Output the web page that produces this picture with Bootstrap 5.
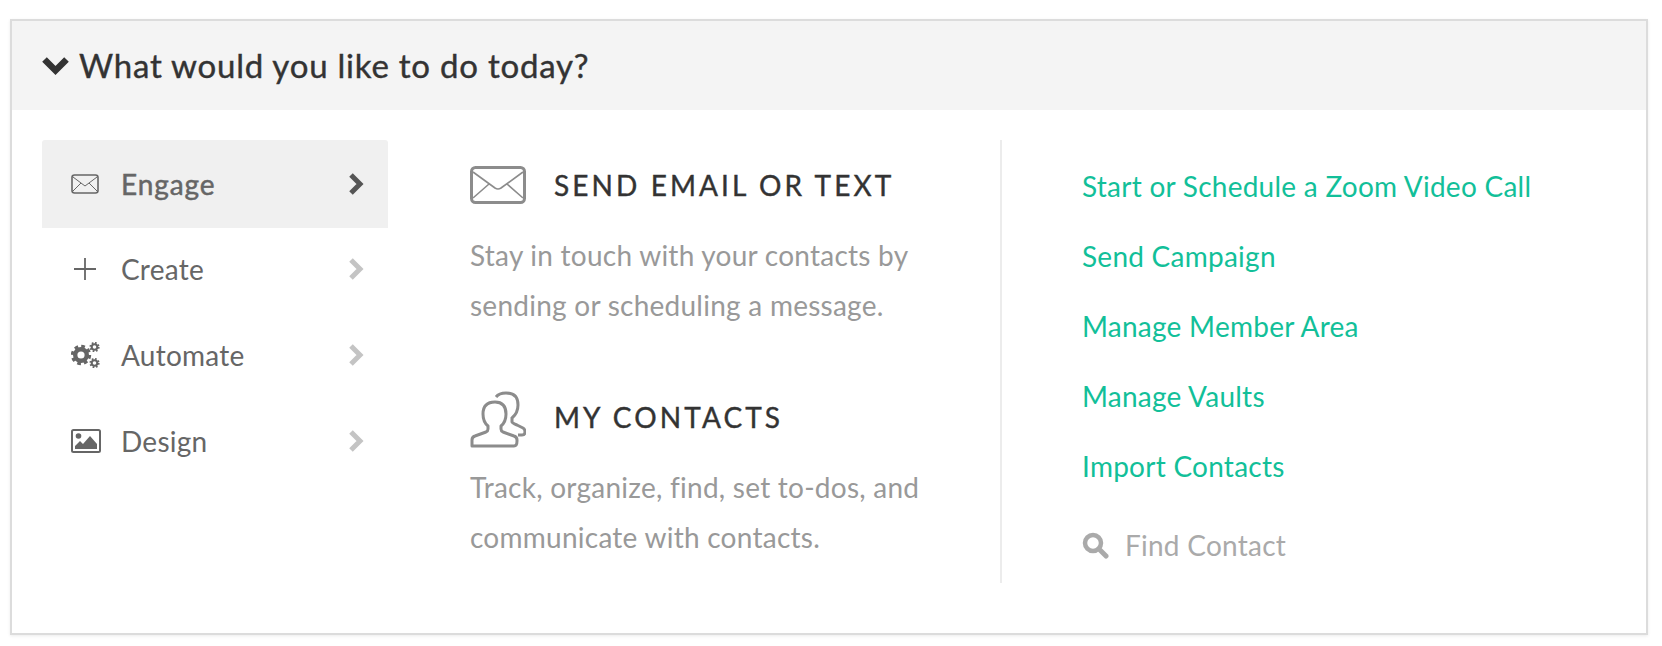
<!DOCTYPE html>
<html lang="en">
<head>
  <meta charset="UTF-8">
  <title>Dashboard</title>
  <meta name="viewport" content="width=device-width, initial-scale=1">
  <link href="https://cdn.jsdelivr.net/npm/bootstrap@5.3.0/dist/css/bootstrap.min.css" rel="stylesheet">
  <style>
    body { background: #fff; font-family: "Lato", "Noto Sans", sans-serif; padding: 19px 14px 11px 10px; letter-spacing: .25px; }
    .todo-card { border: 2px solid #dcdcdc; border-radius: 0; height: 616px; box-shadow: 0 1px 3px rgba(0,0,0,.08); }
    .todo-head { background: #f4f4f4; border: 0; border-radius: 0 !important; height: 89px; padding: 0 0 0 29px; gap: 9px; color: #333; font-size: 33px; letter-spacing: .77px; -webkit-text-stroke: .4px #333; }
    .todo-body { padding: 30px 0 0 30px; }
    .side-col { width: 346px; flex: none; }
    .side-item { height: 86px; padding: 0 23px 0 29px; color: #666; font-size: 28px; }
    .side-item.is-active { background: #f0f0f0; height: 88px; margin-bottom: -2px; letter-spacing: .9px; -webkit-text-stroke: .5px #666; border-radius: 3px 3px 0 0; }
    .side-ico { width: 32px; margin-right: 18px; flex: none; }
    .side-arrow { margin-left: auto; }
    .mid-col { width: 614px; flex: none; height: 443px; padding: 0 0 0 82px; border-right: 2px solid #ececec; }
    .mid-head { height: 46px; gap: 28px; color: #333; font-size: 28px; letter-spacing: 3.1px; -webkit-text-stroke: .4px #333; }
    .mid-ico { width: 56px; flex: none; }
    .mid-ico-low { margin-top: 6px; }
    .mid-text { color: #999; font-size: 28px; line-height: 50px; margin: 22px 0 0; }
    .mid-block { padding-top: 22px; }
    .mid-block + .mid-block { padding-top: 0; margin-top: 64px; }
    .right-col { padding: 11px 0 0 80px; }
    .right-link { display: block; color: #12bf99; font-size: 28px; line-height: 70px; height: 70px; text-decoration: none; }
    .find-row { color: #aaa; font-size: 28px; gap: 16px; margin-top: 9px; height: 70px; }
  </style>
</head>
<body>

  <div class="card todo-card">
    <div class="card-header todo-head d-flex align-items-center">
      <svg width="29" height="20" viewBox="0 0 29 20"><polyline points="3.5,3.5 14.5,14.5 25.5,3.5" fill="none" stroke="#333" stroke-width="6.5"/></svg>
      <span>What would you like to do today?</span>
    </div>
    <div class="todo-body d-flex">

      <!-- Left menu -->
      <div class="side-col">
        <div class="side-item is-active d-flex align-items-center">
          <svg class="side-ico" height="20" viewBox="0 0 32 20"><rect x="1" y="1" width="26" height="18" rx="2.5" fill="none" stroke="#666" stroke-width="1.6"/><path d="M2 3l12 9 12-9M2 17l8-8M26 17l-8-8" fill="none" stroke="#666" stroke-width="1"/></svg>
          <span>Engage</span>
          <svg class="side-arrow" width="17" height="24" viewBox="0 0 17 24"><polyline points="3,3 12,12 3,21" fill="none" stroke="#555" stroke-width="5"/></svg>
        </div>
        <div class="side-item d-flex align-items-center">
          <svg class="side-ico" height="24" viewBox="0 0 32 24"><path d="M14 1v22M3 12h22" fill="none" stroke="#666" stroke-width="1.8"/></svg>
          <span>Create</span>
          <svg class="side-arrow" width="17" height="24" viewBox="0 0 17 24"><polyline points="3,3 12,12 3,21" fill="none" stroke="#c4c4c4" stroke-width="5"/></svg>
        </div>
        <div class="side-item d-flex align-items-center">
          <svg class="side-ico" height="26" viewBox="0 0 32 26">
            <circle cx="10" cy="13" r="5.8" fill="none" stroke="#666" stroke-width="4.4"/>
            <circle cx="10" cy="13" r="8.5" fill="none" stroke="#666" stroke-width="3.4" stroke-dasharray="3.6 3.07"/>
            <circle cx="23.5" cy="5" r="2.8" fill="none" stroke="#666" stroke-width="2"/>
            <circle cx="23.5" cy="5" r="4.2" fill="none" stroke="#666" stroke-width="1.8" stroke-dasharray="1.65 1.65"/>
            <circle cx="23.5" cy="21" r="2.8" fill="none" stroke="#666" stroke-width="2"/>
            <circle cx="23.5" cy="21" r="4.2" fill="none" stroke="#666" stroke-width="1.8" stroke-dasharray="1.65 1.65"/>
          </svg>
          <span>Automate</span>
          <svg class="side-arrow" width="17" height="24" viewBox="0 0 17 24"><polyline points="3,3 12,12 3,21" fill="none" stroke="#c4c4c4" stroke-width="5"/></svg>
        </div>
        <div class="side-item d-flex align-items-center">
          <svg class="side-ico" height="24" viewBox="0 0 32 24"><rect x="1" y="1" width="28" height="22" rx="1.5" fill="none" stroke="#666" stroke-width="2"/><circle cx="7.5" cy="7" r="2.8" fill="#666"/><path d="M4 20v-3l5-5 3 3 7-8 7 8v5z" fill="#666"/></svg>
          <span>Design</span>
          <svg class="side-arrow" width="17" height="24" viewBox="0 0 17 24"><polyline points="3,3 12,12 3,21" fill="none" stroke="#c4c4c4" stroke-width="5"/></svg>
        </div>
      </div>

      <!-- Middle text -->
      <div class="mid-col">
        <div class="mid-block">
          <div class="mid-head d-flex align-items-center">
            <svg class="mid-ico" height="38" viewBox="0 0 56 38"><rect x="1.5" y="1.5" width="53" height="35" rx="4" fill="none" stroke="#8c8c8c" stroke-width="3"/><path d="M3 6l22 16q3 2 6 0l22-16M3 32l16-14M53 32l-16-14" fill="none" stroke="#8c8c8c" stroke-width="1.6"/></svg>
            <span>SEND EMAIL OR TEXT</span>
          </div>
          <p class="mid-text">Stay in touch with your contacts by<br>sending or scheduling a message.</p>
        </div>
        <div class="mid-block">
          <div class="mid-head d-flex align-items-center">
            <svg class="mid-ico mid-ico-low" height="58" viewBox="0 0 56 58"><path d="M2 55v-6q0-3 3-4l11-4q2-1 2-3v-3q-5-4-5-12 0-12 12-12 11 0 11 12 0 8-5 12v3q0 2 2 3l11 4q3 1 3 4v1q0 5-3 5z" fill="none" stroke="#8c8c8c" stroke-width="3" stroke-linejoin="round"/><path d="M26 6q3-4 10-4 12 0 12 12 0 8-6 13v4q0 1 5 3l6 3q2 1 2 4t-3 3h-4" fill="none" stroke="#8c8c8c" stroke-width="3"/></svg>
            <span>MY CONTACTS</span>
          </div>
          <p class="mid-text">Track, organize, find, set to-dos, and<br>communicate with contacts.</p>
        </div>
      </div>

      <!-- Right links -->
      <div class="right-col">
        <a class="right-link" href="#">Start or Schedule a Zoom Video Call</a>
        <a class="right-link" href="#">Send Campaign</a>
        <a class="right-link" href="#">Manage Member Area</a>
        <a class="right-link" href="#">Manage Vaults</a>
        <a class="right-link" href="#">Import Contacts</a>
        <div class="find-row d-flex align-items-center">
          <svg width="27" height="27" viewBox="0 0 27 27"><circle cx="11" cy="11" r="8" fill="none" stroke="#aaa" stroke-width="4.5"/><path d="M17 17l7 7" stroke="#aaa" stroke-width="5" stroke-linecap="round"/></svg>
          <span>Find Contact</span>
        </div>
      </div>

    </div>
  </div>

</body>
</html>
